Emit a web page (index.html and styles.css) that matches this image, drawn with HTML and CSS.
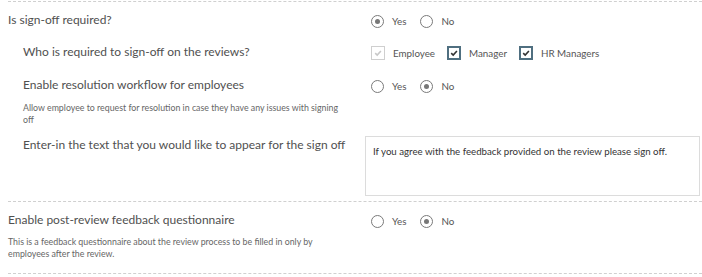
FILE: index.html
```html
<!DOCTYPE html>
<html>
<head>
<meta charset="utf-8">
<link rel="stylesheet" href="styles.css">
</head>
<body>
<div class="settings">
  <div class="section">
    <div class="row r1">
      <div class="label main">Is sign-off required?</div>
      <div class="control">
        <span class="opt"><span class="radio on"></span>Yes</span>
        <span class="opt"><span class="radio"></span>No</span>
      </div>
    </div>
    <div class="row r2">
      <div class="label sub">Who is required to sign-off on the reviews?</div>
      <div class="control checks">
        <span class="opt"><span class="check disabled"><svg viewBox="0 0 10 10"><path d="M2.2 5.2 L4.2 7.1 L7.9 3" /></svg></span>Employee</span>
        <span class="opt"><span class="check"><svg viewBox="0 0 10 10"><path d="M2.2 5.2 L4.2 7.1 L7.9 3" /></svg></span>Manager</span>
        <span class="opt"><span class="check"><svg viewBox="0 0 10 10"><path d="M2.2 5.2 L4.2 7.1 L7.9 3" /></svg></span>HR Managers</span>
      </div>
    </div>
    <div class="row r3">
      <div class="label sub">Enable resolution workflow for employees
        <div class="desc">Allow employee to request for resolution in case they have any issues with signing off</div>
      </div>
      <div class="control">
        <span class="opt"><span class="radio"></span>Yes</span>
        <span class="opt"><span class="radio on"></span>No</span>
      </div>
    </div>
    <div class="row textrow">
      <div class="label sub">Enter-in the text that you would like to appear for the sign off</div>
      <div class="control">
        <div class="textbox">If you agree with the feedback provided on the review please sign off.</div>
      </div>
    </div>
  </div>
  <div class="section last">
    <div class="row">
      <div class="label main">Enable post-review feedback questionnaire
        <div class="desc d2">This is a feedback questionnaire about the review process to be filled in only by employees after the review.</div>
      </div>
      <div class="control">
        <span class="opt"><span class="radio"></span>Yes</span>
        <span class="opt"><span class="radio on"></span>No</span>
      </div>
    </div>
  </div>
</div>
</body>
</html>
```
FILE: styles.css
```css
html, body {
  margin: 0;
  padding: 0;
  background: #fff;
}
body {
  font-family: Lato, "Open Sans", sans-serif;
  color: #555;
  padding: 1px 0 0 8px;
}
.section {
  border-top: 1px dashed #d0d0d0;
  padding: 8px 0 5px;
}
.section.last {
  border-bottom: 1px dashed #d0d0d0;
  padding-bottom: 13px;
}
.row {
  display: grid;
  grid-template-columns: 357px 1fr;
}
.r1 { margin-bottom: 12px; }
.r2 { margin-bottom: 13px; }
.r3 { margin-bottom: 9px; }
.label {
  font-size: 12px;
  line-height: 20px;
  color: #505050;
  white-space: nowrap;
}
.label.sub {
  padding-left: 15px;
}
.desc {
  font-size: 8.8px;
  line-height: 12px;
  color: #666;
  margin-top: 7px;
  width: 322px;
  white-space: normal;
}
.desc.d2 {
  margin-top: 6px;
}
.control {
  display: flex;
  align-items: flex-start;
  gap: 14px;
  padding-left: 6px;
  padding-top: 4px;
}
.control.checks {
  gap: 12px;
}
.opt {
  display: inline-flex;
  align-items: center;
  font-size: 9.8px;
  line-height: 14px;
  color: #555;
}
.radio {
  box-sizing: border-box;
  width: 13px;
  height: 13px;
  border: 1.5px solid #7a7a7a;
  border-radius: 50%;
  margin-right: 8px;
  display: inline-flex;
  align-items: center;
  justify-content: center;
}
.radio.on::after {
  content: "";
  width: 5px;
  height: 5px;
  border-radius: 50%;
  background: #777;
}
.check {
  box-sizing: border-box;
  width: 14px;
  height: 14px;
  border: 2px solid #4f6f80;
  margin-right: 8px;
  display: inline-flex;
  align-items: center;
  justify-content: center;
}
.check svg {
  width: 10px;
  height: 10px;
  fill: none;
  stroke: #333;
  stroke-width: 1.6;
}
.check.disabled {
  border: 1.5px solid #cfcfcf;
}
.check.disabled svg {
  stroke: #c8c8c8;
}
.textrow .control {
  padding-left: 0;
  padding-top: 1px;
}
.textbox {
  box-sizing: border-box;
  width: 335px;
  height: 60px;
  border: 1px solid #dcdcdc;
  padding: 8px 7px;
  font-size: 9.7px;
  line-height: 12px;
  color: #333;
}
```
